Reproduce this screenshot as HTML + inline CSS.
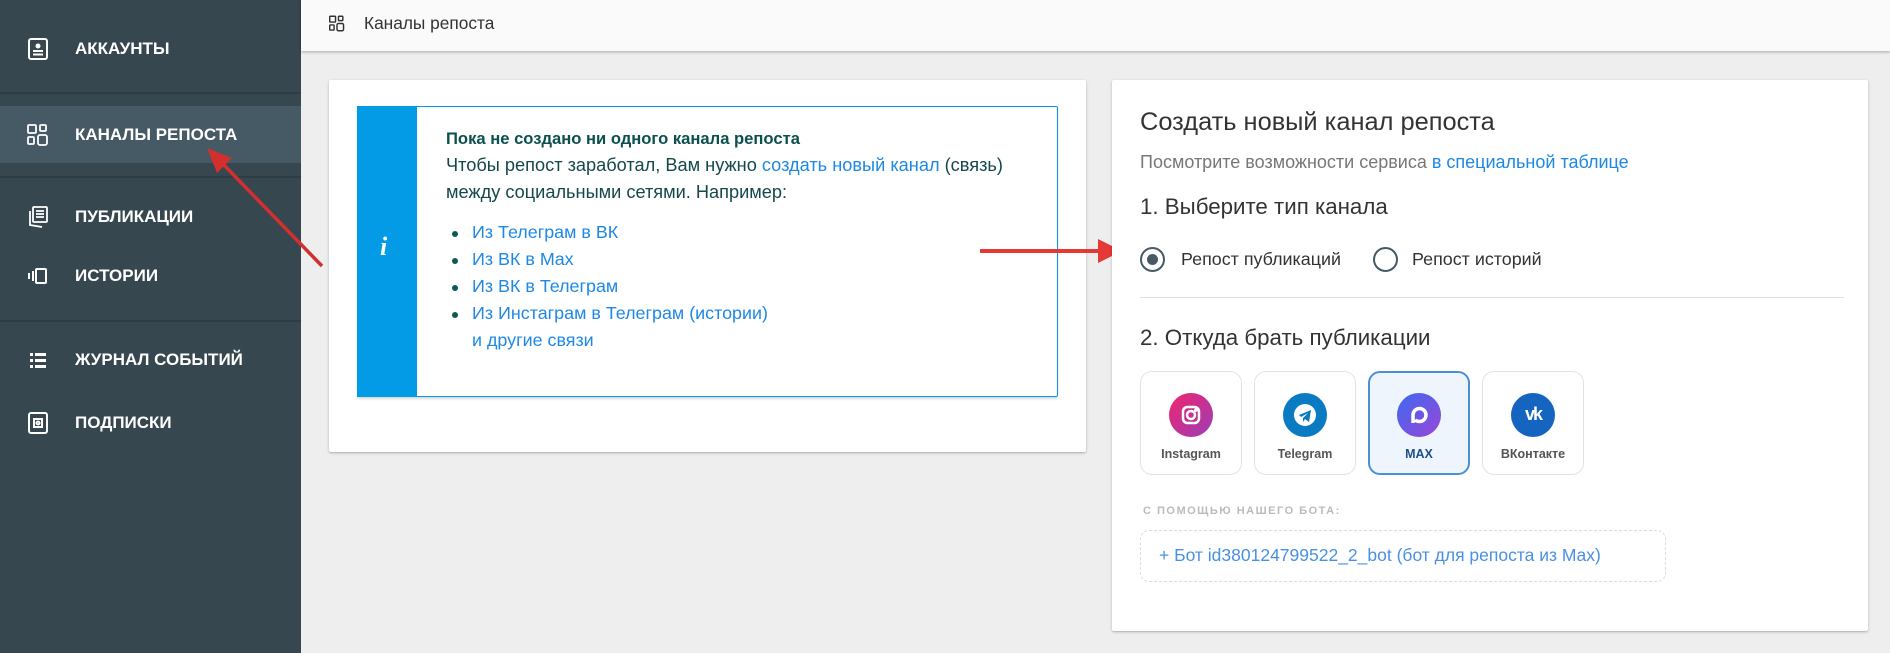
<!DOCTYPE html>
<html><head><meta charset="utf-8"><style>
*{margin:0;padding:0;box-sizing:border-box}
body{width:1890px;height:653px;overflow:hidden;background:#eeeeee;font-family:"Liberation Sans",sans-serif;position:relative}
.abs{position:absolute}
#side{left:0;top:0;width:301px;height:653px;background:#37474f}
.item{position:absolute;left:0;width:301px;height:40px;color:#fff;font-size:17px;font-weight:bold;display:flex;align-items:center}
.item .ic{position:absolute;left:27px;width:22px;height:22px}
.item span{position:absolute;left:75px}
.sep{position:absolute;left:0;width:301px;height:2px;background:#2e3c43}
#hdr{left:301px;top:0;width:1589px;height:51px;background:#fafafa;box-shadow:0 1px 3px rgba(0,0,0,.3)}
.card{background:#fff;box-shadow:0 1px 3px rgba(0,0,0,.2),0 1px 1px rgba(0,0,0,.1);border-radius:2px}
.t{position:absolute;white-space:nowrap}
a{color:#1e88e5;text-decoration:none}
.soc{position:absolute;top:371px;width:102px;height:104px;border:1px solid #e3e3e3;border-radius:12px;background:#fff}
.soc .c{position:absolute;left:28px;top:21px;width:44px;height:44px;border-radius:50%}
.soc .l{position:absolute;left:0;right:0;top:75px;text-align:center;font-size:12.5px;font-weight:bold;color:#555}
.li{position:absolute;left:472px;font-size:17.9px;color:#1e88e5;white-space:nowrap}
.dot{position:absolute;left:452px;width:6px;height:6px;border-radius:50%;background:#0b5a5a}
</style></head><body>
<div id="side" class="abs">
 <div class="item" style="top:29px"><svg class="ic" viewBox="0 0 22 22"><rect x="2" y="1" width="18" height="20" rx="2" fill="none" stroke="#fff" stroke-width="2"/><circle cx="11" cy="8" r="2.5" fill="#fff"/><rect x="6" y="12" width="10" height="2" fill="#fff"/><rect x="6" y="15.5" width="10" height="2" fill="#fff"/></svg><span>АККАУНТЫ</span></div>
 <div class="sep" style="top:92px"></div>
 <div style="position:absolute;left:0;top:106px;width:301px;height:57px;background:#455a64"></div>
 <div class="item" style="top:115px"><svg class="ic" viewBox="0 0 22 22" fill="none" stroke="#fff" stroke-width="1.8"><rect x="1" y="1" width="8" height="8" rx="1"/><rect x="13" y="1" width="6" height="6" rx="1"/><rect x="1" y="13" width="6" height="7" rx="1"/><rect x="11" y="11" width="9" height="10" rx="2"/></svg><span>КАНАЛЫ РЕПОСТА</span></div>
 <div class="sep" style="top:176px"></div>
 <div class="item" style="top:197px"><svg class="ic" viewBox="0 0 22 22" fill="none" stroke="#fff" stroke-width="1.8"><rect x="6" y="1" width="14" height="15" rx="1"/><path d="M3 5v14l12 2M9 5h8M9 8h8M9 11h8"/></svg><span>ПУБЛИКАЦИИ</span></div>
 <div class="item" style="top:256px"><svg class="ic" viewBox="0 0 22 22" fill="none" stroke="#fff" stroke-width="2"><rect x="9" y="4" width="10" height="14" rx="1"/><path d="M6 6v10M2 8v6"/></svg><span>ИСТОРИИ</span></div>
 <div class="sep" style="top:320px"></div>
 <div class="item" style="top:340px"><svg class="ic" viewBox="0 0 22 22" fill="#fff"><rect x="3" y="4" width="3" height="3"/><rect x="8" y="4" width="11" height="3"/><rect x="3" y="10" width="3" height="3"/><rect x="8" y="10" width="11" height="3"/><rect x="3" y="16" width="3" height="3"/><rect x="8" y="16" width="11" height="3"/></svg><span>ЖУРНАЛ СОБЫТИЙ</span></div>
 <div class="item" style="top:403px"><svg class="ic" viewBox="0 0 22 22" fill="none" stroke="#fff" stroke-width="2"><rect x="2" y="1" width="18" height="20" rx="2"/><rect x="7" y="7" width="8" height="8"/><circle cx="11" cy="11" r="1.5"/></svg><span>ПОДПИСКИ</span></div>
</div>
<div id="hdr" class="abs">
 <svg class="abs" style="left:28px;top:15px" width="16" height="17" viewBox="0 0 22 22" fill="none" stroke="#333" stroke-width="2"><rect x="1" y="1" width="8" height="8" rx="1"/><rect x="13" y="1" width="6" height="6" rx="1"/><rect x="1" y="13" width="6" height="7" rx="1"/><rect x="11" y="11" width="9" height="10" rx="2"/></svg>
 <div class="t" style="left:63px;top:13px;font-size:17.3px;color:#333">Каналы репоста</div>
</div>
<div class="abs card" style="left:329px;top:80px;width:757px;height:372px"></div>
<div class="abs" style="left:357px;top:106px;width:701px;height:291px;border:1px solid #039be5;border-radius:2px;background:#fff;box-shadow:0 2px 2px rgba(0,0,0,.15)"></div>
<div class="abs" style="left:357px;top:106px;width:60px;height:291px;background:#039be5"></div>
<div class="t" style="left:380px;top:232px;color:#fff;font:italic bold 26px 'Liberation Serif',serif">i</div>
<div class="t" style="left:446px;top:129px;font-size:16.6px;font-weight:bold;color:#0b4f4f">Пока не создано ни одного канала репоста</div>
<div class="t" style="left:446px;top:155px;font-size:18.2px;color:#15484a">Чтобы репост заработал, Вам нужно <a>создать новый канал</a> (связь)</div>
<div class="t" style="left:446px;top:182px;font-size:18.2px;color:#15484a">между социальными сетями. Например:</div>
<div class="dot" style="top:231px"></div><div class="li" style="top:222px">Из Телеграм в ВК</div>
<div class="dot" style="top:258px"></div><div class="li" style="top:249px">Из ВК в Max</div>
<div class="dot" style="top:285px"></div><div class="li" style="top:276px">Из ВК в Телеграм</div>
<div class="dot" style="top:312px"></div><div class="li" style="top:303px">Из Инстаграм в Телеграм (истории)</div>
<div class="li" style="top:330px">и другие связи</div>
<svg class="abs" style="left:0;top:0" width="1890" height="653">
 <line x1="980" y1="251" x2="1100" y2="251" stroke="#e53935" stroke-width="4"/>
 <polygon points="1122,251 1098,239 1098,263" fill="#e53935"/>
 <line x1="322" y1="266" x2="222" y2="163" stroke="#d32f2f" stroke-width="3.5"/>
 <polygon points="207,148 232,158 217,173" fill="#d32f2f"/>
</svg>
<div class="abs card" style="left:1112px;top:80px;width:756px;height:551px"></div>
<div class="t" style="left:1140px;top:108px;font-size:25.4px;color:#333">Создать новый канал репоста</div>
<div class="t" style="left:1140px;top:152px;font-size:18px;color:#777">Посмотрите возможности сервиса <a>в специальной таблице</a></div>
<div class="t" style="left:1140px;top:194px;font-size:22.3px;color:#333">1. Выберите тип канала</div>
<div class="abs" style="left:1140px;top:247px;width:25px;height:25px;border:2.5px solid #455a64;border-radius:50%"></div>
<div class="abs" style="left:1147px;top:254px;width:11px;height:11px;background:#455a64;border-radius:50%"></div>
<div class="t" style="left:1181px;top:249px;font-size:17.9px;color:#333">Репост публикаций</div>
<div class="abs" style="left:1373px;top:247px;width:25px;height:25px;border:2.5px solid #455a64;border-radius:50%"></div>
<div class="t" style="left:1412px;top:249px;font-size:17.9px;color:#333">Репост историй</div>
<div class="abs" style="left:1140px;top:297px;width:704px;height:1px;background:#e0e0e0"></div>
<div class="t" style="left:1140px;top:325px;font-size:22.3px;color:#333">2. Откуда брать публикации</div>
<div class="soc" style="left:1140px"><div class="c" style="background:linear-gradient(135deg,#f0246e,#9b3fb5)"><svg width="44" height="44" viewBox="0 0 44 44" fill="none" stroke="#fff" stroke-width="2.5"><rect x="14" y="14" width="16" height="16" rx="4.5"/><circle cx="22" cy="22" r="4"/><circle cx="27" cy="17" r=".6" fill="#fff"/></svg></div><div class="l">Instagram</div></div>
<div class="soc" style="left:1254px"><div class="c" style="background:#0a7bc2"><svg width="44" height="44" viewBox="0 0 44 44"><circle cx="22" cy="22" r="11" fill="#fff"/><path d="M16 22l12-5-2 12-4-3-2 3v-4l5-5-7 4z" fill="#0a7bc2"/></svg></div><div class="l">Telegram</div></div>
<div class="soc" style="left:1368px;border:2px solid #4a90d9;background:#eef5fd"><div class="c" style="left:27px;top:20px;background:linear-gradient(135deg,#3d6af0,#9a45d8)"><svg width="44" height="44" viewBox="0 0 44 44" fill="none" stroke="#fff" stroke-width="3.5"><path d="M16 30V22a6.5 6.5 0 1 1 6.5 6.5c-2 0-3.5-.7-4.5-1.5"/></svg></div><div class="l" style="top:74px;color:#1f4e8c">MAX</div></div>
<div class="soc" style="left:1482px"><div class="c" style="background:#1565c0"><div style="position:absolute;left:0;right:0;top:11px;text-align:center;color:#fff;font-weight:bold;font-size:18px;letter-spacing:-2px">vk</div></div><div class="l">ВКонтакте</div></div>
<div class="t" style="left:1143px;top:505px;font-size:11px;font-weight:bold;color:#bbb;letter-spacing:1.5px">С ПОМОЩЬЮ НАШЕГО БОТА:</div>
<div class="abs" style="left:1140px;top:530px;width:526px;height:52px;border:1px dashed #dcdcdc;border-radius:9px"></div>
<div class="t" style="left:1159px;top:545px;font-size:17.5px;color:#4a90e2">+ Бот id380124799522_2_bot (бот для репоста из Max)</div>
</body></html>
